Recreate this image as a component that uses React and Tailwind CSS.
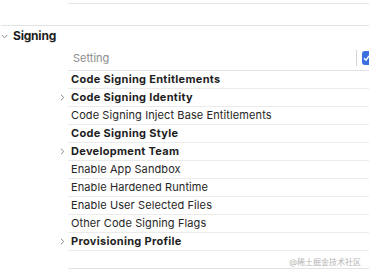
import React from "react";

const ROWS = [
  { label: "Code Signing Entitlements", bold: true },
  { label: "Code Signing Identity", bold: true, expand: true },
  { label: "Code Signing Inject Base Entitlements" },
  { label: "Code Signing Style", bold: true },
  { label: "Development Team", bold: true, expand: true },
  { label: "Enable App Sandbox" },
  { label: "Enable Hardened Runtime" },
  { label: "Enable User Selected Files" },
  { label: "Other Code Signing Flags" },
  { label: "Provisioning Profile", bold: true, expand: true },
];

function Chevron({ down }) {
  return (
    <svg width="7" height="7" viewBox="0 0 7 7" className="text-[#8a8a8a]">
      <path
        d={down ? "M0.8 2 L3.5 4.8 L6.2 2" : "M2 0.8 L4.8 3.5 L2 6.2"}
        fill="none"
        stroke="currentColor"
        strokeWidth="1"
      />
    </svg>
  );
}

export default function App() {
  return (
    <div
      className="w-[369px] h-[272px] overflow-hidden bg-white text-[#222]"
      style={{ fontFamily: "Inter, 'Noto Sans CJK SC', sans-serif" }}
    >
      <div className="pt-[3px] pl-[68px]">
        <div className="h-px bg-[#e6e6e6]" />
      </div>
      <div className="h-[21px]" />
      <div className="h-px bg-[#e3e3e3] ml-[1px]" />

      {/* section header */}
      <div className="flex items-center h-[20px] pl-[1px]">
        <Chevron down />
        <span className="ml-[5px] text-[12px] font-bold tracking-[-0.2px] text-[#1e1e1e]">
          Signing
        </span>
      </div>

      {/* column header */}
      <div className="ml-[68px] flex items-center h-[24px]">
        <span className="pl-[5px] text-[11px] text-[#8c8c8c]">Setting</span>
        <div className="ml-auto flex items-center">
          <div className="w-px h-[16px] bg-[#d4d4d4]" />
          <div className="ml-[5px] w-[7px] h-[14px] rounded-l-[3px] bg-[#3b6fe0] flex items-center">
            <svg width="7" height="14" viewBox="0 0 7 14">
              <path d="M2 7.2 L4 9.2 L7 5" fill="none" stroke="#fff" strokeWidth="1.4" />
            </svg>
          </div>
        </div>
      </div>
      <div className="ml-[68px] h-px bg-[#e3e3e3]" />

      {ROWS.map((r) => (
        <div key={r.label} className="flex flex-col">
          <div className="flex items-center h-[17px]">
            <div className="w-[71px] flex justify-end pr-[5px]">
              {r.expand && <Chevron />}
            </div>
            <span
              className={
                "text-[11px] " +
                (r.bold
                  ? "font-bold tracking-[0.3px] text-[#1e1e1e]"
                  : "tracking-[0.1px] text-[#262626]")
              }
            >
              {r.label}
            </span>
          </div>
          <div className="ml-[68px] h-px bg-[#ebebeb]" />
        </div>
      ))}

      <div className="ml-[68px] h-[17px] flex items-end justify-end pr-[8px]">
        <span className="text-[8px] text-[#b4b4b4] leading-none pb-[2px]">
          @稀土掘金技术社区
        </span>
      </div>
      <div className="ml-[68px] h-px bg-[#e3e3e3]" />
    </div>
  );
}
